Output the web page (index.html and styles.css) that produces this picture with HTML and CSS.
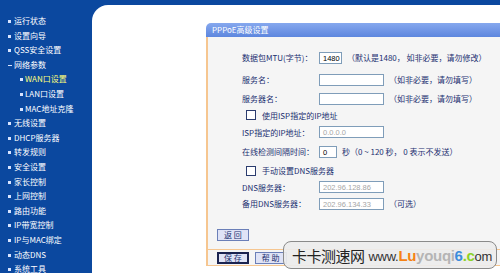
FILE: index.html
```html
<!doctype html>
<html>
<head>
<meta charset="utf-8">
<title>PPPoE高级设置</title>
<link rel="stylesheet" href="styles.css">
</head>
<body>
	<div class="page">
		<ul class="menu">
			<li>运行状态</li>
			<li>设置向导</li>
			<li>QSS安全设置</li>
			<li class="open">网络参数</li>
			<li class="sub on">WAN口设置</li>
			<li class="sub">LAN口设置</li>
			<li class="sub">MAC地址克隆</li>
			<li>无线设置</li>
			<li>DHCP服务器</li>
			<li>转发规则</li>
			<li>安全设置</li>
			<li>家长控制</li>
			<li>上网控制</li>
			<li>路由功能</li>
			<li>IP带宽控制</li>
			<li>IP与MAC绑定</li>
			<li>动态DNS</li>
			<li>系统工具</li>
		</ul>

		<div class="main">
			<div class="box">
				<div class="box-title">PPPoE高级设置</div>
				<div class="box-body">
					<div class="row h23">
						<span class="label">数据包MTU(字节)：</span>
						<span class="field mtu">1480</span>
						<span class="note">（默认是1480， 如非必要，请勿修改）</span>
					</div>
					<div class="row h21">
						<span class="label">服务名：</span>
						<span class="field"></span>
						<span class="note">（如非必要，请勿填写）</span>
					</div>
					<div class="row h17">
						<span class="label">服务器名：</span>
						<span class="field"></span>
						<span class="note">（如非必要，请勿填写）</span>
					</div>
					<div class="row h16 check">
						<span class="box-check"></span>
						<span class="label">使用ISP指定的IP地址</span>
					</div>
					<div class="row h18">
						<span class="label">ISP指定的IP地址：</span>
						<span class="field off">0.0.0.0</span>
					</div>
					<div class="row h21">
						<span class="label">在线检测间隔时间：</span>
						<span class="field sec">0</span>
						<span class="note">秒（0 ~ 120 秒， 0 表示不发送）</span>
					</div>
					<div class="row h17 check">
						<span class="box-check"></span>
						<span class="label">手动设置DNS服务器</span>
					</div>
					<div class="row h16">
						<span class="label">DNS服务器：</span>
						<span class="field off">202.96.128.86</span>
					</div>
					<div class="row h17">
						<span class="label">备用DNS服务器：</span>
						<span class="field off">202.96.134.33</span>
						<span class="note">（可选）</span>
					</div>

					<div class="back"><span class="btn">返 回</span></div>
				</div>
				<div class="box-foot">
					<span class="btn focus">保 存</span>
					<span class="btn">帮 助</span>
				</div>
			</div>
		</div>
	</div>

	<div class="mark">
		<span class="mark-cn">卡卡测速网</span>
		<span class="mark-url">www.<b class="o">Lu</b><b class="g">youqi</b><b class="b">6</b><b class="gr">.c</b>om</span>
	</div>
</body>
</html>
```

FILE: styles.css
```css
*{ margin:0; padding:0;}
body{
	background:#0b489f;
	overflow:hidden;
	width:500px;
	height:273px;
	position:relative;
	font-family:"Noto Sans CJK SC","DejaVu Sans",sans-serif;
	font-size:8px;
}
.page{
	display:flex;
	height:273px;
}

/* 左侧菜单 */
.menu{
	width:92px;
	flex:none;
	list-style:none;
	padding-top:14px;
	color:#fff;
}
.menu li{
	height:14.6px;
	line-height:14.6px;
	padding-left:14px;
	position:relative;
	white-space:nowrap;
}
.menu li:before{
	content:'';
	position:absolute;
	left:8px;
	top:6px;
	width:3px;
	height:3px;
	background:#d8e4ff;
}
.menu li.open:before{
	width:4px;
	height:1px;
	top:7px;
}
.menu li.sub{ padding-left:25px;}
.menu li.sub:before{ left:20px;}
.menu li.on{ color:#ffff7a;}

/* 右侧主体 */
.main{
	flex:1;
	margin-top:5px;
	background:#fff;
	border-radius:16px 0 0 0;
	padding:18px 0 0 114px;
	overflow:hidden;
}
.box{
	width:300px;
	color:#1b2f70;
}
.box-title{
	height:14px;
	line-height:14px;
	padding-left:6px;
	color:#fff;
	background:linear-gradient(#86a8ee,#5d86de);
	border-radius:5px 0 0 0;
}
.box-body{
	background:#f5f5f5;
	border-left:2px solid #f6c690;
	padding:9px 0 8px 0;
}
.row{
	display:flex;
	align-items:center;
	padding-left:34px;
}
.h23{ height:23px;}
.h21{ height:21px;}
.h18{ height:18px;}
.h17{ height:17px;}
.h16{ height:16px;}
.label{
	width:77px;
	flex:none;
	white-space:nowrap;
}
.check{ padding-left:38px;}
.check .label{ width:auto;}
.box-check{
	width:8px;
	height:8px;
	border:1px solid #2b3c6e;
	background:#fff;
	margin-right:6px;
}
.field{
	width:65px;
	height:12px;
	line-height:12px;
	border:1px solid #7f9db9;
	background:#fff;
	color:#000;
	padding-left:3px;
	box-sizing:border-box;
	font-family:"Liberation Sans",sans-serif;
	font-size:7.5px;
}
.field.mtu{ width:23px;}
.field.sec{ width:18px;}
.field.off{ color:#a6a6a6;}
.note{
	margin-left:5px;
	white-space:nowrap;
}
.back{
	padding:17px 0 0 9px;
}
.btn{
	display:inline-block;
	height:12px;
	line-height:10px;
	padding:0 6px;
	border:1px solid #6b7fb8;
	background:#dfe3f6;
	color:#1b2f70;
	box-sizing:border-box;
}
.btn.focus{
	border:2px solid #1a2350;
	line-height:8px;
	padding:0 5px;
}
.box-foot{
	border-top:1px solid #f6c690;
	border-bottom:1px solid #f6c690;
	border-left:2px solid #f6c690;
	background:#f5f5f5;
	height:17px;
	padding:2px 0 0 9px;
	box-sizing:border-box;
	display:flex;
	gap:6px;
}

/* 水印 */
.mark{
	position:absolute;
	left:283px;
	top:241px;
	width:214px;
	height:28px;
	box-sizing:border-box;
	border:1px solid #8a8a8a;
	border-radius:8px;
	background:rgba(236,236,236,0.93);
	display:flex;
	align-items:center;
	padding-left:8px;
	white-space:nowrap;
	overflow:hidden;
}
.mark-cn{
	font-size:15px;
	color:#222;
	letter-spacing:-0.5px;
}
.mark-url{
	font-family:"Liberation Sans",sans-serif;
	font-size:13px;
	color:#333;
	margin-left:4px;
	letter-spacing:-0.3px;
}
.mark-url b{ font-size:15px;}
.mark-url .o{ color:#f58214;}
.mark-url .g{ color:#b5b5b5;}
.mark-url .b{ color:#3c8cdc;}
.mark-url .gr{ color:#8cd228;}
```
